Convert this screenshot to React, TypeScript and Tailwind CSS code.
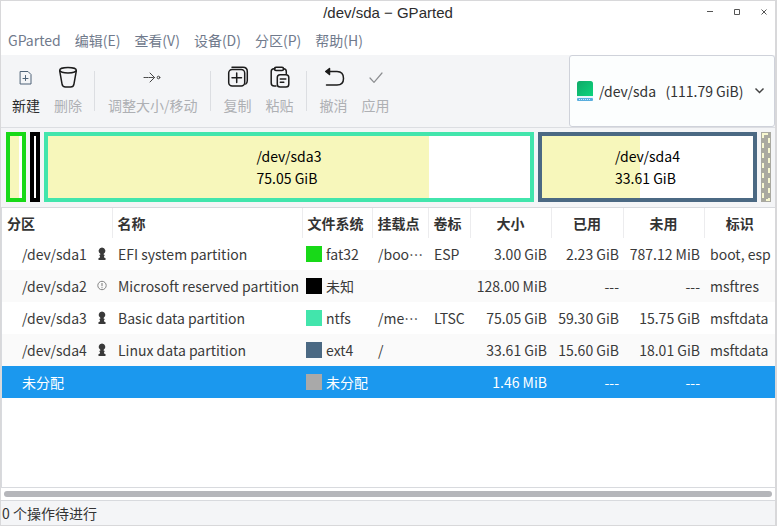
import type { ReactNode } from "react";
import { clsx } from "clsx";

const menus = ["GParted", "编辑(E)", "查看(V)", "设备(D)", "分区(P)", "帮助(H)"];

type Tool = { label: string; icon: ReactNode; enabled?: boolean };

const toolGroups: Tool[][] = [
  [
    {
      label: "新建",
      enabled: true,
      icon: (
        <g stroke="#4f6378" strokeWidth="1">
          <path d="M6.500 6.500h7.500l3 3v9.500h-10.500z" />
          <path d="M11.500 10.500v5M9 13.500h5" />
        </g>
      ),
    },
    {
      label: "删除",
      icon: (
        <g stroke="#1c1c1c" strokeWidth="1.500">
          <ellipse cx="12" cy="5.300" rx="8.300" ry="2.700" />
          <path d="M3.700 5.800l2.300 13q.5 3.200 3.500 3.200h5q3 0 3.500-3.200l2.300-13" />
        </g>
      ),
    },
  ],
  [
    {
      label: "调整大小/移动",
      icon: (
        <g stroke="#444" strokeWidth="1">
          <path d="M3 12.500h10.500" strokeDasharray="1.500 1" />
          <path d="M9 8l4.500 4.500L9 17" />
          <circle cx="17.500" cy="12.500" r="1.300" />
        </g>
      ),
    },
  ],
  [
    {
      label: "复制",
      icon: (
        <g stroke="#1c1c1c" strokeWidth="1.500">
          <rect x="2.700" y="4.500" width="16" height="16.500" rx="3.500" />
          <path d="M6 2.300h11q4.300 0 4.300 4.300v9q0 2.400-1.500 3.400" />
          <path d="M10.700 8v9.500M6 12.800h9.500" />
        </g>
      ),
    },
    {
      label: "粘贴",
      icon: (
        <g stroke="#1c1c1c" strokeWidth="1.500">
          <path d="M7 3.700H6Q3.200 3.700 3.200 6.500v11.500q0 3 3 3H8M15.500 3.700q2.800 0 2.800 2.800v2" />
          <rect x="6.500" y="2.200" width="9" height="3.300" rx="1.500" />
          <rect x="9.300" y="9.800" width="11.500" height="12.300" rx="2.800" />
          <path d="M12.300 14h5.500M12.300 17.300h3.500" />
        </g>
      ),
    },
  ],
  [
    {
      label: "撤消",
      icon: (
        <g stroke="#1c1c1c" strokeWidth="1.500">
          <path d="M4 6.500h11q6.500 0 6.500 7 0 6.500-6.500 6.500H4.500" />
          <path d="M7.500 3.500L3.800 6.500l3.700 3z" fill="#1c1c1c" />
        </g>
      ),
    },
    {
      label: "应用",
      icon: <path d="M6 13l4 4.300L18 8" stroke="#8b8d90" strokeWidth="1.200" />,
    },
  ],
];

type Partition = {
  name: string;
  status?: "locked" | "warning";
  label: string;
  fs: string;
  swatch: string;
  mount: string;
  volume: string;
  size: string;
  used: string;
  unused: string;
  flags: string;
};

const partitions: Partition[] = [
  { name: "/dev/sda1", status: "locked", label: "EFI system partition", fs: "fat32", swatch: "bg-[#18d918]", mount: "/boo…", volume: "ESP", size: "3.00 GiB", used: "2.23 GiB", unused: "787.12 MiB", flags: "boot, esp" },
  { name: "/dev/sda2", status: "warning", label: "Microsoft reserved partition", fs: "未知", swatch: "bg-black", mount: "", volume: "", size: "128.00 MiB", used: "---", unused: "---", flags: "msftres" },
  { name: "/dev/sda3", status: "locked", label: "Basic data partition", fs: "ntfs", swatch: "bg-[#42e5ac]", mount: "/me…", volume: "LTSC", size: "75.05 GiB", used: "59.30 GiB", unused: "15.75 GiB", flags: "msftdata" },
  { name: "/dev/sda4", status: "locked", label: "Linux data partition", fs: "ext4", swatch: "bg-[#4b6983]", mount: "/", volume: "", size: "33.61 GiB", used: "15.60 GiB", unused: "18.01 GiB", flags: "msftdata" },
  { name: "未分配", label: "", fs: "未分配", swatch: "bg-[#a9a9a9]", mount: "", volume: "", size: "1.46 MiB", used: "---", unused: "---", flags: "" },
];

const columns = [
  { title: "分区", width: "w-[110px]", align: "text-left" },
  { title: "名称", width: "w-[190px]", align: "text-left" },
  { title: "文件系统", width: "w-[70px]", align: "text-left" },
  { title: "挂载点", width: "w-[56px]", align: "text-left" },
  { title: "卷标", width: "w-[42px]", align: "text-left" },
  { title: "大小", width: "w-[81px]", align: "text-center" },
  { title: "已用", width: "w-[72px]", align: "text-center" },
  { title: "未用", width: "w-[81px]", align: "text-center" },
  { title: "标识", width: "", align: "text-center" },
];

function TitleBar() {
  return (
    <header className="grid h-7 grid-cols-[1fr_auto_1fr] items-start">
      <h1 className="col-start-2 font-['Liberation_Sans',sans-serif] text-[15px] leading-6 text-[#2c2c2c]">
        /dev/sda − GParted
      </h1>
      <div className="flex h-[22px] items-center justify-end gap-[11px] pr-[3px]">
        <button aria-label="最小化" className="flex size-4 items-center justify-center">
          <svg width="8" height="8" stroke="#555" fill="none"><path d="M1 3.500h6" /></svg>
        </button>
        <button aria-label="最大化" className="flex size-4 items-center justify-center">
          <svg width="8" height="8" stroke="#555" fill="none"><path d="M1.500 1.500h5v5h-5z" /></svg>
        </button>
        <button aria-label="关闭" className="flex size-4 items-center justify-center">
          <svg width="8" height="8" stroke="#555" fill="none"><path d="M1.500 1.500l5 5M6.500 1.500l-5 5" /></svg>
        </button>
      </div>
    </header>
  );
}

function DeviceSelect() {
  return (
    <div className="flex w-[206px] items-center rounded-[3px] border border-[#cfd2da] bg-[#fcfefe] pl-[7px] pr-[9px]">
      <svg width="16" height="21" className="shrink-0">
        <defs>
          <linearGradient id="disk" x1="0" y1="0" x2="1" y2="1">
            <stop offset="0" stopColor="#0fa968" />
            <stop offset="1" stopColor="#0cd47c" />
          </linearGradient>
        </defs>
        <path d="M0 2.500Q0 0 2.500 0h11Q16 0 16 2.500V15H0z" fill="url(#disk)" />
        <rect y="15" width="16" height="2" fill="#e8f5fb" />
        <rect y="17" width="16" height="3" rx="1" fill="#5aaede" />
        <path d="M2 18.500h12" stroke="#c9ecff" strokeDasharray="1 1" />
      </svg>
      <select
        aria-label="设备"
        className="ml-[6px] min-w-0 flex-1 appearance-none bg-transparent leading-6 text-[#333] outline-none"
      >
        <option>{"/dev/sda\u00a0\u00a0\u00a0(111.79 GiB)"}</option>
      </select>
      <svg width="11" height="8" fill="none" stroke="#444" strokeWidth="1.500" className="shrink-0">
        <path d="M1.500 1.500l4 4 4-4" />
      </svg>
    </div>
  );
}

function Toolbar() {
  return (
    <div className="flex h-[72px] justify-between bg-[#f4f5f7]">
      <div className="flex items-center pl-1">
        {toolGroups.map((group, i) => (
          <div key={i} className="flex items-center">
            {i > 0 && <div className="mr-[6px] ml-[5px] h-10 w-px bg-[#dcdee2]" />}
            {group.map((tool) => (
              <button
                key={tool.label}
                disabled={!tool.enabled}
                className={clsx(
                  "flex flex-col items-center gap-1 px-[7px]",
                  tool.enabled ? "text-[#2b2b2b]" : "text-[#aeb0b4]",
                )}
              >
                <svg width="24" height="24" fill="none" strokeLinecap="round" strokeLinejoin="round">
                  {tool.icon}
                </svg>
                <span className="leading-6">{tool.label}</span>
              </button>
            ))}
          </div>
        ))}
      </div>
      <DeviceSelect />
    </div>
  );
}

function DiskBar({ name, size, border, used, grow }: {
  name?: string;
  size?: string;
  border: string;
  used: number;
  grow: string;
}) {
  return (
    <div
      className={clsx("grid border-4 bg-white", border, grow)}
      style={{ backgroundImage: `linear-gradient(to right, #f7f7bb ${used}%, #fff ${used}%)`, backgroundOrigin: "content-box" }}
    >
      {name && (
        <div className="place-self-center leading-[22px] text-black">
          <div>{name}</div>
          <div>{size}</div>
        </div>
      )}
    </div>
  );
}

function DiskMap() {
  return (
    <div className="flex h-20 gap-1 border-t border-[#dcdee2] bg-[#f4f5f7] pt-1 pr-1 pb-[5px] pl-[5px]">
      <DiskBar border="border-[#18d918]" used={74} grow="w-5" />
      <DiskBar border="border-black" used={0} grow="w-[10px]" />
      <DiskBar name="/dev/sda3" size="75.05 GiB" border="border-[#42e5ac]" used={79} grow="flex-[482]" />
      <DiskBar name="/dev/sda4" size="33.61 GiB" border="border-[#4b6983]" used={46.4} grow="flex-[211]" />
      <svg width="10" height="70" className="bg-[#a9a9a0]">
        <rect x="2" y="2" width="6" height="66" fill="none" stroke="#f7f7d0" strokeWidth="2" strokeDasharray="5 5" />
      </svg>
    </div>
  );
}

function StatusIcon({ status }: { status: "locked" | "warning" }) {
  if (status === "warning") {
    return (
      <svg width="10" height="14" fill="none" stroke="#777">
        <circle cx="5" cy="6.500" r="4.200" strokeWidth="0.900" />
        <path d="M5 4v3.200M5 8.200v1" />
      </svg>
    );
  }
  return (
    <svg width="10" height="14" fill="#3a3a3a">
      <path d="M5 .5a3.400 3.400 0 0 1 1.700 6.300V7.800h.8v1.200h-.6L7.500 11h1v2h-7v-2h1l.6-2h-.6V7.800h.8V6.800A3.400 3.400 0 0 1 5 .5z" />
    </svg>
  );
}

function PartitionTable() {
  return (
    <table className="w-full table-fixed border-collapse whitespace-nowrap">
      <thead>
        <tr className="h-[30px]">
          {columns.map((c, i) => (
            <th
              key={c.title}
              className={clsx("p-0 font-bold text-[#333]", c.width, c.align, i > 0 && "border-l border-[#ececee]", c.align === "text-left" && "pl-[5px]")}
            >
              {c.title}
            </th>
          ))}
        </tr>
      </thead>
      <tbody>
        {partitions.map((p) => (
          <tr
            key={p.name}
            className={clsx("h-8", p.name === "未分配" ? "bg-[#1b98ee] text-white" : "text-[#3a3a3a] even:bg-[#fafafa]")}
          >
            <td className="p-0 pl-5">
              <div className="flex items-center justify-between pr-[5px]">
                {p.name}
                {p.status && <StatusIcon status={p.status} />}
              </div>
            </td>
            <td className="p-0 pl-[6px]">{p.label}</td>
            <td className="p-0 pl-1">
              <div className="flex items-center gap-1">
                <span className={clsx("size-4 shrink-0", p.swatch)} />
                {p.fs}
              </div>
            </td>
            <td className="p-0 pl-[6px]">{p.mount}</td>
            <td className="p-0 pl-[6px]">{p.volume}</td>
            <td className="p-0 pr-1 text-right">{p.size}</td>
            <td className="p-0 pr-1 text-right">{p.used}</td>
            <td className="p-0 pr-1 text-right">{p.unused}</td>
            <td className="p-0 pl-[6px]">{p.flags}</td>
          </tr>
        ))}
      </tbody>
    </table>
  );
}

export default function App() {
  return (
    <div
      lang="zh-CN"
      className="flex min-h-screen flex-col border border-r-2 border-[#d8d8da] bg-white font-['Noto_Sans_CJK_SC',sans-serif] text-[14px] leading-5"
    >
      <TitleBar />
      <nav className="flex">
        {menus.map((m) => (
          <button key={m} className="px-[7px] pt-px pb-[5px] text-[#707a8c]">
            {m}
          </button>
        ))}
      </nav>
      <Toolbar />
      <DiskMap />
      <main className="flex-1 border-t border-l border-[#d8dade]">
        <PartitionTable />
      </main>
      <div className="border-y border-[#d8dade] px-[3px] py-[3px]">
        <div className="h-[6px] rounded-full bg-[#b5b6ba]" />
      </div>
      <footer className="bg-[#f4f5f7] px-px pt-[2px] pb-[2px] text-[#333]">0 个操作待进行</footer>
    </div>
  );
}
